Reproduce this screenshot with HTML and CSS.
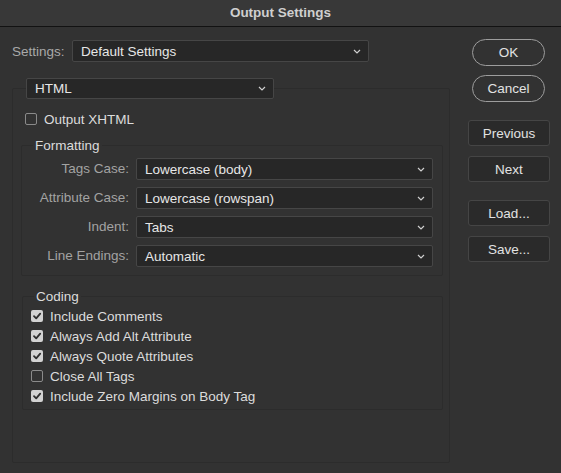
FILE: index.html
```html
<!DOCTYPE html>
<html>
<head>
<meta charset="utf-8">
<link rel="stylesheet" href="styles.css">
</head>
<body>
<div class="window">
  <div class="titlebar">Output Settings</div>
  <div class="content">
    <div class="left">
      <div class="settings-row">
        <span class="settings-label">Settings:</span>
        <div class="select select-settings"><span>Default Settings</span><svg class="chev" width="8" height="5" viewBox="0 0 8 5"><path d="M1 1 L4 4 L7 1" fill="none" stroke="#cfcfcf" stroke-width="1.2"/></svg></div>
      </div>
      <div class="panel">
        <div class="select select-html"><span>HTML</span><svg class="chev" width="8" height="5" viewBox="0 0 8 5"><path d="M1 1 L4 4 L7 1" fill="none" stroke="#cfcfcf" stroke-width="1.2"/></svg></div>
        <div class="check-row xhtml"><span class="box"></span><span>Output XHTML</span></div>
        <div class="group formatting">
          <div class="group-title">Formatting</div>
          <div class="form-grid">
            <span class="flabel">Tags Case:</span>
            <div class="select select-form"><span>Lowercase (body)</span><svg class="chev" width="8" height="5" viewBox="0 0 8 5"><path d="M1 1 L4 4 L7 1" fill="none" stroke="#cfcfcf" stroke-width="1.2"/></svg></div>
            <span class="flabel">Attribute Case:</span>
            <div class="select select-form"><span>Lowercase (rowspan)</span><svg class="chev" width="8" height="5" viewBox="0 0 8 5"><path d="M1 1 L4 4 L7 1" fill="none" stroke="#cfcfcf" stroke-width="1.2"/></svg></div>
            <span class="flabel">Indent:</span>
            <div class="select select-form"><span>Tabs</span><svg class="chev" width="8" height="5" viewBox="0 0 8 5"><path d="M1 1 L4 4 L7 1" fill="none" stroke="#cfcfcf" stroke-width="1.2"/></svg></div>
            <span class="flabel">Line Endings:</span>
            <div class="select select-form"><span>Automatic</span><svg class="chev" width="8" height="5" viewBox="0 0 8 5"><path d="M1 1 L4 4 L7 1" fill="none" stroke="#cfcfcf" stroke-width="1.2"/></svg></div>
          </div>
        </div>
        <div class="group coding">
          <div class="group-title">Coding</div>
          <div class="check-list">
            <div class="check-row"><span class="box checked"><svg width="12" height="12" viewBox="0 0 12 12"><path d="M3 6.2 L5.2 8.4 L9.2 3.6" fill="none" stroke="#2e2e2e" stroke-width="1.8" stroke-linecap="round" stroke-linejoin="round"/></svg></span><span>Include Comments</span></div>
            <div class="check-row"><span class="box checked"><svg width="12" height="12" viewBox="0 0 12 12"><path d="M3 6.2 L5.2 8.4 L9.2 3.6" fill="none" stroke="#2e2e2e" stroke-width="1.8" stroke-linecap="round" stroke-linejoin="round"/></svg></span><span>Always Add Alt Attribute</span></div>
            <div class="check-row"><span class="box checked"><svg width="12" height="12" viewBox="0 0 12 12"><path d="M3 6.2 L5.2 8.4 L9.2 3.6" fill="none" stroke="#2e2e2e" stroke-width="1.8" stroke-linecap="round" stroke-linejoin="round"/></svg></span><span>Always Quote Attributes</span></div>
            <div class="check-row"><span class="box"></span><span>Close All Tags</span></div>
            <div class="check-row"><span class="box checked"><svg width="12" height="12" viewBox="0 0 12 12"><path d="M3 6.2 L5.2 8.4 L9.2 3.6" fill="none" stroke="#2e2e2e" stroke-width="1.8" stroke-linecap="round" stroke-linejoin="round"/></svg></span><span>Include Zero Margins on Body Tag</span></div>
          </div>
        </div>
      </div>
    </div>
    <div class="right">
      <div class="pill ok">OK</div>
      <div class="pill cancel">Cancel</div>
      <div class="btn previous">Previous</div>
      <div class="btn next">Next</div>
      <div class="btn load">Load...</div>
      <div class="btn save">Save...</div>
    </div>
  </div>
</div>
</body>
</html>
```

FILE: styles.css
```css
* { box-sizing: border-box; }
html, body {
  margin: 0;
  padding: 0;
  background: #323232;
}
body {
  font-family: "Liberation Sans", Arial, sans-serif;
  font-size: 13.5px;
  color: #dedede;
}
.window {
  width: 561px;
  height: 473px;
  background: #323232;
  overflow: hidden;
}
.titlebar {
  height: 27px;
  line-height: 25px;
  background: #383838;
  border-bottom: 1px solid #121212;
  text-align: center;
  font-weight: bold;
  color: #cfcfcf;
}
.content {
  display: flex;
  padding-top: 13px;
}
.left {
  margin-left: 12px;
  width: 438px;
}
.settings-row {
  display: flex;
  align-items: center;
  height: 22px;
}
.settings-label {
  width: 60px;
  color: #a9a9a9;
}
.select {
  display: flex;
  align-items: center;
  justify-content: space-between;
  background: #272727;
  border: 1px solid #464646;
  border-radius: 2px;
  color: #e6e6e6;
  padding: 0 7px 0 8px;
}
.chev { display: block; }
.select-settings {
  width: 297px;
  height: 22px;
}
.panel {
  margin-top: 26px;
  height: 375px;
  border: 1px solid #2c2c2c;
  border-radius: 2px;
  padding: 0 0 0 13px;
}
.select-html {
  width: 248px;
  height: 21px;
  margin-top: -11px;
}
.check-row {
  display: flex;
  align-items: center;
  height: 20px;
  gap: 7px;
  color: #dcdcdc;
}
.xhtml {
  margin-top: 10px;
  margin-left: -1px;
}
.box {
  display: block;
  width: 12px;
  height: 12px;
  border: 1px solid #8a8a8a;
  border-radius: 2px;
  flex: none;
}
.box.checked {
  border: none;
  background: #d2d2d2;
}
.box svg { display: block; }
.group {
  margin-left: -5px;
  width: 422px;
  border: 1px solid #2c2c2c;
  border-radius: 2px;
}
.group-title {
  display: block;
  width: fit-content;
  margin-top: -8px;
  margin-left: 11px;
  padding: 0 2px;
  line-height: 16px;
  background: #323232;
  color: #dcdcdc;
}
.formatting {
  margin-top: 16px;
  padding-bottom: 8px;
}
.form-grid {
  display: grid;
  grid-template-columns: 107px 297px;
  column-gap: 7px;
  row-gap: 7px;
  margin-top: 4px;
}
.flabel {
  text-align: right;
  color: #a3a3a3;
  line-height: 22px;
}
.select-form {
  height: 22px;
}
.coding {
  margin-top: 20px;
  margin-left: -4px;
  width: 421px;
  height: 114px;
}
.check-list {
  margin-top: 1px;
  padding-left: 8px;
}
.right {
  margin-left: 18px;
  width: 82px;
  display: flex;
  flex-direction: column;
}
.pill {
  margin-left: 4px;
  width: 73px;
  height: 27px;
  border: 1px solid #9d9d9d;
  border-radius: 14px;
  display: flex;
  align-items: center;
  justify-content: center;
  color: #e2e2e2;
}
.ok { margin-top: -1px; }
.cancel { margin-top: 9px; }
.btn {
  width: 82px;
  height: 26px;
  background: #2a2a2a;
  border: 1px solid #454545;
  border-radius: 3px;
  display: flex;
  align-items: center;
  justify-content: center;
  color: #e2e2e2;
}
.previous { margin-top: 18px; }
.next { margin-top: 10px; }
.load { margin-top: 18px; }
.save { margin-top: 10px; }
```
